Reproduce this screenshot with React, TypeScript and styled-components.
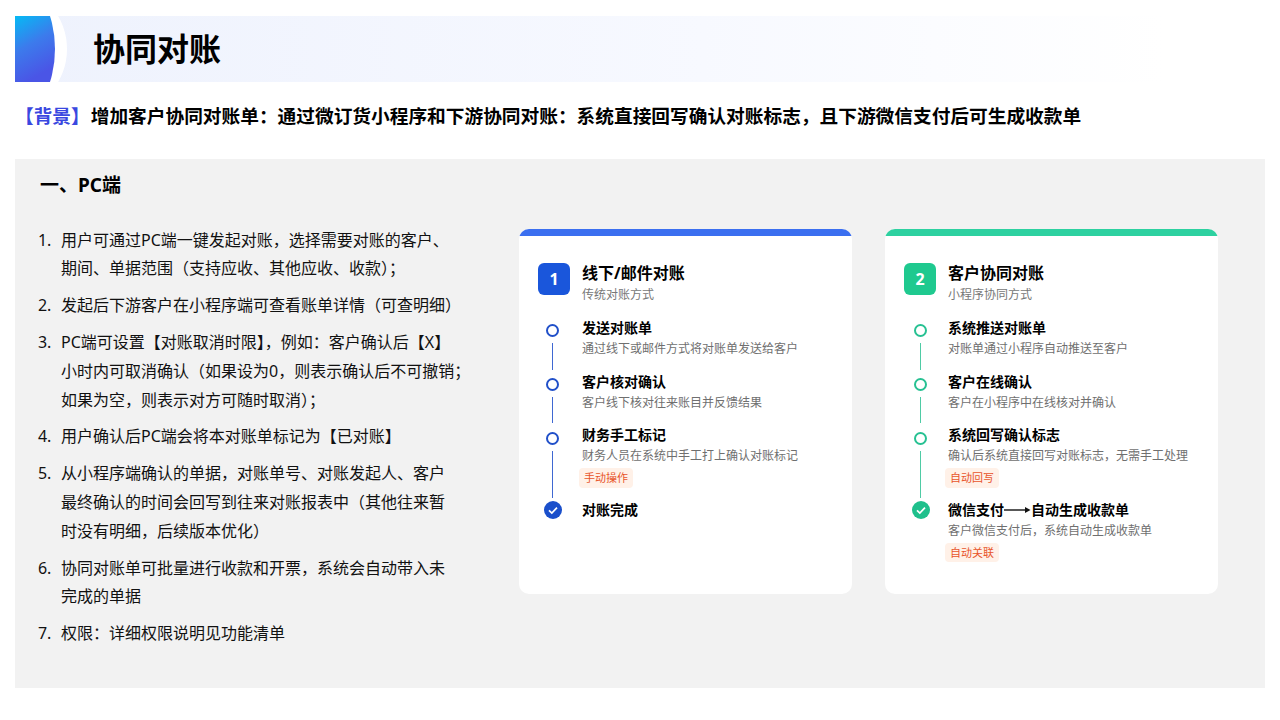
import React, { FC } from 'react';
import styled, { createGlobalStyle } from 'styled-components';

type Tone = 'blue' | 'green';

const tones = {
  blue: { bar: '#3b6ff0', badge: '#1a56db', dot: '#2150c9', line: '#3f68d2', check: '#1a4fcb', inset: 15 },
  green: { bar: '#2dd1a0', badge: '#1fc98f', dot: '#27c192', line: '#4fcba5', check: '#1fc08c', inset: 11 },
};

interface Step {
  title: React.ReactNode;
  desc?: string;
  tag?: string;
  done?: boolean;
}

const listItems = [
  ['用户可通过PC端一键发起对账，选择需要对账的客户、', '期间、单据范围（支持应收、其他应收、收款）；'],
  ['发起后下游客户在小程序端可查看账单详情（可查明细）'],
  [
    'PC端可设置【对账取消时限】，例如：客户确认后【X】',
    '小时内可取消确认（如果设为0，则表示确认后不可撤销；',
    '如果为空，则表示对方可随时取消）；',
  ],
  ['用户确认后PC端会将本对账单标记为【已对账】'],
  [
    '从小程序端确认的单据，对账单号、对账发起人、客户',
    '最终确认的时间会回写到往来对账报表中（其他往来暂',
    '时没有明细，后续版本优化）',
  ],
  ['协同对账单可批量进行收款和开票，系统会自动带入未', '完成的单据'],
  ['权限：详细权限说明见功能清单'],
];

const offlineSteps: Step[] = [
  { title: '发送对账单', desc: '通过线下或邮件方式将对账单发送给客户' },
  { title: '客户核对确认', desc: '客户线下核对往来账目并反馈结果' },
  { title: '财务手工标记', desc: '财务人员在系统中手工打上确认对账标记', tag: '手动操作' },
  { title: '对账完成', done: true },
];

const onlineSteps: Step[] = [
  { title: '系统推送对账单', desc: '对账单通过小程序自动推送至客户' },
  { title: '客户在线确认', desc: '客户在小程序中在线核对并确认' },
  { title: '系统回写确认标志', desc: '确认后系统直接回写对账标志，无需手工处理', tag: '自动回写' },
  {
    title: (
      <>
        微信支付
        <ArrowIcon />
        自动生成收款单
      </>
    ),
    desc: '客户微信支付后，系统自动生成收款单',
    tag: '自动关联',
    done: true,
  },
];

function ArrowIcon() {
  return (
    <ArrowSvg viewBox="0 0 27 8" width="27" height="8">
      <path d="M0 4h22" stroke="#111" strokeWidth="1.4" fill="none" />
      <path d="M21 1l5.5 3L21 7z" fill="#111" />
    </ArrowSvg>
  );
}

const FlowCard: FC<{ tone: Tone; index: number; title: string; sub: string; steps: Step[] }> = ({
  tone,
  index,
  title,
  sub,
  steps,
}) => (
  <Card>
    <TopBar $tone={tone} />
    <CardHead>
      <NumberBadge $tone={tone}>{index}</NumberBadge>
      <div>
        <CardTitle>{title}</CardTitle>
        <CardSub>{sub}</CardSub>
      </div>
    </CardHead>
    {steps.map((step, i) => (
      <StepRow key={i}>
        <Marker $tone={tone}>
          {step.done ? (
            <CheckDot $tone={tone}>
              <svg viewBox="0 0 18 18" width="18" height="18">
                <path d="M5 9.4l2.8 2.6L13 6.6" stroke="#fff" strokeWidth="1.7" fill="none" />
              </svg>
            </CheckDot>
          ) : (
            <Dot $tone={tone} />
          )}
          {i < steps.length - 1 && <StepLine $tone={tone} />}
        </Marker>
        <StepBody>
          <StepTitle>{step.title}</StepTitle>
          {step.desc && <StepDesc>{step.desc}</StepDesc>}
          {step.tag && <Tag>{step.tag}</Tag>}
        </StepBody>
      </StepRow>
    ))}
  </Card>
);

const App: FC = () => {
  return (
    <>
      <GlobalStyle />
      <Page>
        <Header>
          <HeaderTitle>协同对账</HeaderTitle>
        </Header>
        <Background>
          <em>【背景】</em>增加客户协同对账单：通过微订货小程序和下游协同对账：系统直接回写确认对账标志，且下游微信支付后可生成收款单
        </Background>
        <Panel>
          <PanelHeading>一、PC端</PanelHeading>
          <PanelBody>
            <Steps>
              {listItems.map((lines, i) => (
                <li key={i}>
                  {lines.map((line) => (
                    <ListLine key={line}>{line}</ListLine>
                  ))}
                </li>
              ))}
            </Steps>
            <Cards>
              <FlowCard tone="blue" index={1} title="线下/邮件对账" sub="传统对账方式" steps={offlineSteps} />
              <FlowCard tone="green" index={2} title="客户协同对账" sub="小程序协同方式" steps={onlineSteps} />
            </Cards>
          </PanelBody>
        </Panel>
      </Page>
    </>
  );
};

export default App;

const GlobalStyle = createGlobalStyle`
  html, body {
    margin: 0;
    background: #fff;
  }
  body {
    font-family: "Noto Sans", "Noto Sans CJK SC", sans-serif;
    color: #000;
  }
`;

const Page = styled.div`
  width: 1280px;
  height: 720px;
  box-sizing: border-box;
  padding: 16px 15px 0;
  overflow: hidden;
`;

const Header = styled.div`
  position: relative;
  height: 66px;
  display: flex;
  align-items: center;
  padding-left: 78px;
  overflow: hidden;
  background: linear-gradient(90deg, #eef2fd 0%, #f7f9ff 55%, #ffffff 92%);

  &::before {
    content: '';
    position: absolute;
    left: -52px;
    top: -26px;
    width: 104px;
    height: 118px;
    border-radius: 50%;
    background: #fff;
  }

  &::after {
    content: '';
    position: absolute;
    left: -40px;
    top: -35px;
    width: 80px;
    height: 136px;
    border-radius: 50%;
    background: linear-gradient(150deg, #00c0f5 30%, #3c7bec 52%, #4a55e6 72%);
  }
`;

const HeaderTitle = styled.h1`
  margin: 0;
  font-size: 32px;
  line-height: 44px;
  font-weight: 700;
  color: #000;
`;

const Background = styled.div`
  margin-top: 20px;
  font-size: 18.7px;
  line-height: 28px;
  font-weight: 700;
  white-space: nowrap;

  em {
    font-style: normal;
    color: #3a48e0;
    margin-right: 1px;
  }
`;

const Panel = styled.section`
  margin-top: 29px;
  height: 529px;
  box-sizing: border-box;
  padding-top: 12px;
  background: #f2f2f2;
`;

const PanelHeading = styled.h2`
  margin: 0 0 26.6px 25px;
  font-size: 19px;
  line-height: 28px;
  font-weight: 700;
`;

const PanelBody = styled.div`
  display: flex;
  align-items: flex-start;
`;

const Steps = styled.ol`
  width: 504px;
  flex: none;
  box-sizing: border-box;
  margin: 0;
  padding: 0 0 0 46px;
  font-size: 16px;
  line-height: 28.8px;
  color: #111;

  li + li {
    margin-top: 8px;
  }

  li::marker {
    content: counter(list-item) ".\\2002\\200A";
  }
`;

const ListLine = styled.span`
  display: block;
  white-space: nowrap;
`;

const Cards = styled.div`
  display: flex;
  gap: 33px;
  margin-top: 3.4px;
`;

const Card = styled.div`
  width: 333px;
  height: 365px;
  box-sizing: border-box;
  padding: 0 19px;
  border-radius: 10px;
  overflow: hidden;
  background: #fff;
`;

const TopBar = styled.div<{ $tone: Tone }>`
  height: 7px;
  margin: 0 -19px 27px;
  background: ${(p) => tones[p.$tone].bar};
`;

const CardHead = styled.div`
  display: flex;
  gap: 12px;
  margin-bottom: 14px;
`;

const NumberBadge = styled.div<{ $tone: Tone }>`
  width: 32px;
  height: 32px;
  flex: none;
  display: flex;
  align-items: center;
  justify-content: center;
  border-radius: 6px;
  background: ${(p) => tones[p.$tone].badge};
  color: #fff;
  font-size: 16px;
  font-weight: 700;
`;

const CardTitle = styled.div`
  font-size: 16px;
  line-height: 18px;
  margin-top: 1px;
  font-weight: 700;
`;

const CardSub = styled.div`
  margin-top: 3px;
  font-size: 12px;
  line-height: 20px;
  color: #777;
`;

const StepRow = styled.div`
  display: flex;
`;

const Marker = styled.div<{ $tone: Tone }>`
  width: 44px;
  flex: none;
  box-sizing: border-box;
  display: flex;
  flex-direction: column;
  align-items: center;
  padding-right: ${(p) => tones[p.$tone].inset}px;
`;

const Dot = styled.div<{ $tone: Tone }>`
  width: 13px;
  height: 13px;
  flex: none;
  box-sizing: border-box;
  margin-top: 5.5px;
  border: 2px solid ${(p) => tones[p.$tone].dot};
  border-radius: 50%;
  background: #fff;
`;

const CheckDot = styled.div<{ $tone: Tone }>`
  width: 18px;
  height: 18px;
  flex: none;
  margin-top: 0.5px;
  border-radius: 50%;
  background: ${(p) => tones[p.$tone].check};

  svg {
    display: block;
  }
`;

const StepLine = styled.div<{ $tone: Tone }>`
  width: 1px;
  flex: 1;
  margin: 6px 0 3px;
  background: ${(p) => tones[p.$tone].line};
`;

const StepBody = styled.div`
  flex: 1;
  min-width: 0;
  padding-bottom: 14.7px;
`;

const StepTitle = styled.div`
  font-size: 14px;
  line-height: 18px;
  font-weight: 700;
  white-space: nowrap;
`;

const ArrowSvg = styled.svg`
  display: inline-block;
  vertical-align: middle;
  margin: 0 0 2px 0;
`;

const StepDesc = styled.div`
  margin-top: 3px;
  font-size: 12px;
  line-height: 18px;
  color: #6f6f6f;
  white-space: nowrap;
`;

const Tag = styled.div`
  width: fit-content;
  margin: 3px 0 -1.6px -3px;
  padding: 0 5px;
  border-radius: 4px;
  background: #fff1e8;
  color: #e8552b;
  font-size: 11px;
  line-height: 19.5px;
`;
